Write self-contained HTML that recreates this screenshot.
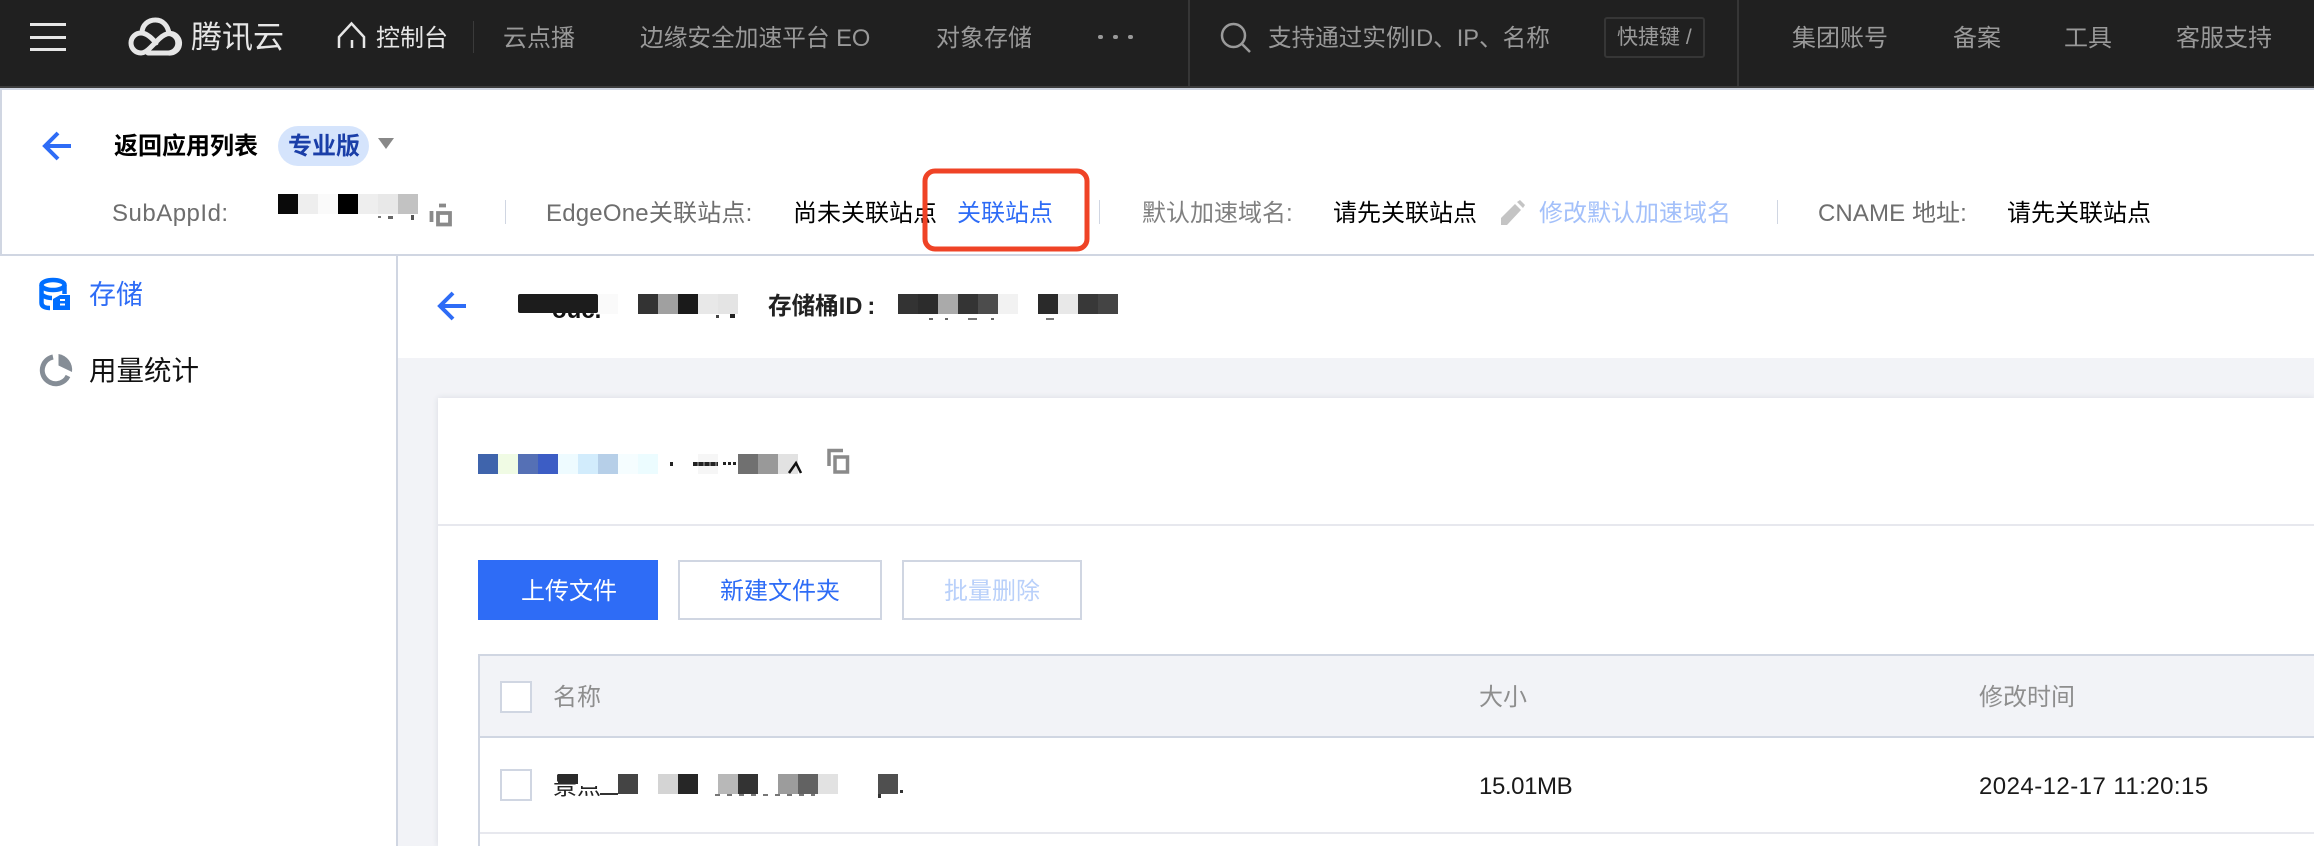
<!DOCTYPE html>
<html lang="zh">
<head>
<meta charset="utf-8">
<title>腾讯云</title>
<style>
html,body{margin:0;padding:0;width:2314px;height:846px;overflow:hidden;background:#fff}
body{position:relative;font-family:"Liberation Sans","Noto Sans CJK SC",sans-serif;font-size:24px}
.a{position:absolute}
.t{position:absolute;white-space:nowrap;line-height:34px;height:34px}
.n{color:#999;top:22px}
.g{color:#6e6e6e;top:197px}
.k{color:#000;top:197px}
.b{background:#d0d6e2}
svg{position:absolute;left:0;top:0;overflow:visible}
</style>
</head>
<body>
<!-- top nav -->
<div class="a" style="left:0;top:0;width:2314px;height:86px;background:#202020"></div>
<div class="a" style="left:0;top:86px;width:2314px;height:2px;background:#3c3c3c"></div>
<div class="a" style="left:0;top:88px;width:2314px;height:2px;background:#d0d6e2"></div>
<div class="a" style="left:30px;top:23px;width:36px;height:3px;background:#e6e6e6"></div>
<div class="a" style="left:30px;top:36px;width:36px;height:3px;background:#e6e6e6"></div>
<div class="a" style="left:30px;top:48px;width:36px;height:3px;background:#e6e6e6"></div>
<div class="t" style="left:191px;top:20px;font-size:31px;color:#e6e6e6;line-height:36px;height:36px">腾讯云</div>
<div class="t" style="left:376px;top:22px;color:#e6e6e6">控制台</div>
<div class="a" style="left:473px;top:21px;width:1px;height:32px;background:#3a3a3a"></div>
<div class="t n" style="left:503px">云点播</div>
<div class="t n" style="left:640px;font-size:23.700px">边缘安全加速平台 EO</div>
<div class="t n" style="left:936px">对象存储</div>
<div class="a" style="left:1098px;top:35px;width:5px;height:4px;background:#999;border-radius:3px"></div>
<div class="a" style="left:1113px;top:35px;width:5px;height:4px;background:#999;border-radius:3px"></div>
<div class="a" style="left:1128px;top:35px;width:5px;height:4px;background:#999;border-radius:3px"></div>
<div class="a" style="left:1188px;top:0;width:2px;height:86px;background:#363636"></div>
<div class="t n" style="left:1268px;font-size:23.6px">支持通过实例ID、IP、名称</div>
<div class="a" style="left:1604px;top:17px;width:97px;height:37px;border:2px solid #363636;border-radius:3px"></div>
<div class="t n" style="left:1617px;top:21px;font-size:21px">快捷键 /</div>
<div class="a" style="left:1737px;top:0;width:2px;height:86px;background:#363636"></div>
<div class="t n" style="left:1792px">集团账号</div>
<div class="t n" style="left:1953px">备案</div>
<div class="t n" style="left:2064px">工具</div>
<div class="t n" style="left:2176px">客服支持</div>

<!-- app header panel -->
<div class="a" style="left:0;top:90px;width:2px;height:166px;background:#d0d6e2"></div>
<div class="a" style="left:0;top:254px;width:2314px;height:2px;background:#d0d6e2"></div>
<div class="t" style="left:114px;top:130px;font-size:24px;font-weight:700;color:#000">返回应用列表</div>
<div class="a" style="left:278px;top:126px;width:91px;height:40px;border-radius:20px;background:#d5e4fc"></div>
<div class="t" style="left:288px;top:130px;font-size:24px;font-weight:700;color:#1a3ea8">专业版</div>
<div class="a" style="left:378px;top:138px;width:0;height:0;border-left:8px solid transparent;border-right:8px solid transparent;border-top:11px solid #888"></div>
<div class="t g" style="left:112px;letter-spacing:.5px">SubAppId:</div>
<div class="a" style="left:278px;top:194px;width:20px;height:20px;background:#0a0a0a"></div>
<div class="a" style="left:298px;top:194px;width:20px;height:20px;background:#eee"></div>
<div class="a" style="left:318px;top:194px;width:20px;height:20px;background:#fafafa"></div>
<div class="a" style="left:338px;top:194px;width:20px;height:20px;background:#000"></div>
<div class="a" style="left:358px;top:194px;width:20px;height:20px;background:#eee"></div>
<div class="a" style="left:378px;top:194px;width:20px;height:20px;background:#e8e8e8"></div>
<div class="a" style="left:398px;top:194px;width:20px;height:20px;background:#c2c2c2"></div>
<div class="a" style="left:378px;top:216px;width:3px;height:2px;background:#777"></div>
<div class="a" style="left:388px;top:216px;width:5px;height:3px;background:#666"></div>
<div class="a" style="left:411px;top:215px;width:3px;height:5px;background:#555"></div>
<div class="a b" style="left:505px;top:200px;width:1px;height:24px"></div>
<div class="t g" style="left:546px;letter-spacing:.2px">EdgeOne关联站点:</div>
<div class="t k" style="left:793px">尚未关联站点</div>
<div class="t" style="left:957px;top:197px;color:#2e6cf6">关联站点</div>
<div class="a b" style="left:1099px;top:200px;width:1px;height:24px"></div>
<div class="t g" style="left:1142px;color:#808080">默认加速域名:</div>
<div class="t k" style="left:1333px">请先关联站点</div>
<div class="t" style="left:1539px;top:197px;color:#a3c0fa">修改默认加速域名</div>
<div class="a b" style="left:1777px;top:200px;width:1px;height:24px"></div>
<div class="t g" style="left:1818px;letter-spacing:.1px">CNAME 地址:</div>
<div class="t k" style="left:2007px">请先关联站点</div>

<!-- sidebar -->
<div class="a b" style="left:396px;top:256px;width:2px;height:590px"></div>
<div class="t" style="left:89px;top:278px;font-size:27px;color:#2e6cf6">存储</div>
<div class="t" style="left:89px;top:354px;font-size:27.500px;color:#111">用量统计</div>

<!-- main -->
<div class="a" style="left:398px;top:358px;width:1916px;height:488px;background:#f2f3f7"></div>
<div class="a" style="left:438px;top:398px;width:1876px;height:448px;background:#fff;box-shadow:0 0 6px rgba(40,50,80,.12)"></div>

<!-- bucket header mosaics -->
<div class="t" style="left:552px;top:298px;font-size:24px;font-weight:700;color:#111;height:26px;line-height:26px;clip-path:inset(15px 0 0 0)">ouc.</div>
<div class="a" style="left:518px;top:294px;width:80px;height:19px;background:#1c1c1c;border-radius:2px"></div>
<div class="a" style="left:598px;top:294px;width:20px;height:20px;background:#fafafa"></div>
<div class="a" style="left:638px;top:294px;width:20px;height:20px;background:#333"></div>
<div class="a" style="left:658px;top:294px;width:20px;height:20px;background:#a0a0a0"></div>
<div class="a" style="left:678px;top:294px;width:20px;height:20px;background:#1a1a1a"></div>
<div class="a" style="left:698px;top:294px;width:20px;height:20px;background:#e8e8e8"></div>
<div class="a" style="left:718px;top:294px;width:20px;height:20px;background:#e4e4e4"></div>
<div class="a" style="left:716px;top:315px;width:3px;height:3px;background:#444"></div>
<div class="a" style="left:730px;top:314px;width:5px;height:4px;background:#222"></div>
<div class="t" style="left:768px;top:290px;font-size:23.600px;font-weight:700;color:#222">存储桶ID<span style="margin-left:5px">:</span></div>
<div class="a" style="left:898px;top:294px;width:20px;height:20px;background:#333"></div>
<div class="a" style="left:918px;top:294px;width:20px;height:20px;background:#2c2c2c"></div>
<div class="a" style="left:938px;top:294px;width:20px;height:20px;background:#aaa"></div>
<div class="a" style="left:958px;top:294px;width:20px;height:20px;background:#343434"></div>
<div class="a" style="left:978px;top:294px;width:20px;height:20px;background:#4c4c4c"></div>
<div class="a" style="left:998px;top:294px;width:20px;height:20px;background:#f2f2f2"></div>
<div class="a" style="left:1038px;top:294px;width:20px;height:20px;background:#2a2a2a"></div>
<div class="a" style="left:1058px;top:294px;width:20px;height:20px;background:#e8e8e8"></div>
<div class="a" style="left:1078px;top:294px;width:20px;height:20px;background:#383838"></div>
<div class="a" style="left:1098px;top:294px;width:20px;height:20px;background:#444"></div>
<div class="a" style="left:929px;top:318px;width:4px;height:2px;background:#666"></div>
<div class="a" style="left:945px;top:318px;width:3px;height:2px;background:#666"></div>
<div class="a" style="left:968px;top:318px;width:9px;height:2px;background:#777"></div>
<div class="a" style="left:991px;top:318px;width:3px;height:2px;background:#666"></div>
<div class="a" style="left:1046px;top:318px;width:8px;height:2px;background:#777"></div>

<!-- card title mosaics -->
<div class="a" style="left:478px;top:454px;width:20px;height:20px;background:#3f64ac"></div>
<div class="a" style="left:498px;top:454px;width:20px;height:20px;background:#f0fbe4"></div>
<div class="a" style="left:518px;top:454px;width:20px;height:20px;background:#5570b5"></div>
<div class="a" style="left:538px;top:454px;width:20px;height:20px;background:#3c5dc5"></div>
<div class="a" style="left:558px;top:454px;width:20px;height:20px;background:#eefbff"></div>
<div class="a" style="left:578px;top:454px;width:20px;height:20px;background:#d2ecfc"></div>
<div class="a" style="left:598px;top:454px;width:20px;height:20px;background:#b6cfe8"></div>
<div class="a" style="left:618px;top:454px;width:20px;height:20px;background:#f5fdff"></div>
<div class="a" style="left:638px;top:454px;width:20px;height:20px;background:#ecfcff"></div>
<div class="a" style="left:670px;top:462px;width:3px;height:4px;background:#222"></div>
<div class="a" style="left:698px;top:454px;width:20px;height:20px;background:#f6f6f6"></div>
<div class="a" style="left:693px;top:462px;width:25px;height:4px;background:repeating-linear-gradient(90deg,#222 0 4px,#666 4px 6px)"></div>
<div class="a" style="left:723px;top:462px;width:15px;height:3px;background:repeating-linear-gradient(90deg,#222 0 3px,#fff 3px 5px)"></div>
<div class="a" style="left:738px;top:454px;width:20px;height:20px;background:#707070"></div>
<div class="a" style="left:758px;top:454px;width:20px;height:20px;background:#999"></div>
<div class="a" style="left:778px;top:454px;width:20px;height:20px;background:#e2e2e2"></div>
<div class="a" style="left:438px;top:524px;width:1876px;height:2px;background:#e7e8ee"></div>

<!-- buttons -->
<div class="a" style="left:478px;top:560px;width:180px;height:60px;background:#2e6cf6"></div>
<div class="t" style="left:521px;top:574.500px;color:#fff">上传文件</div>
<div class="a" style="left:678px;top:560px;width:200px;height:56px;border:2px solid #d0d6e2"></div>
<div class="t" style="left:720px;top:574.500px;color:#2e6cf6">新建文件夹</div>
<div class="a" style="left:902px;top:560px;width:176px;height:56px;border:2px solid #d0d6e2"></div>
<div class="t" style="left:944px;top:574.500px;color:#b9d0fa">批量删除</div>

<!-- table -->
<div class="a" style="left:478px;top:654px;width:1836px;height:2px;background:#d0d6e2"></div>
<div class="a" style="left:480px;top:656px;width:1834px;height:80px;background:#f2f3f7"></div>
<div class="a" style="left:478px;top:736px;width:1836px;height:2px;background:#d0d6e2"></div>
<div class="a" style="left:478px;top:654px;width:2px;height:192px;background:#d0d6e2"></div>
<div class="a" style="left:480px;top:832px;width:1834px;height:2px;background:#e7e8ee"></div>
<div class="a" style="left:500px;top:681px;width:28px;height:28px;border:2px solid #d0d6e2;background:#fff"></div>
<div class="a" style="left:500px;top:769px;width:28px;height:28px;border:2px solid #d0d6e2;background:#fff"></div>
<div class="t" style="left:553px;top:681px;color:#8e8e8e">名称</div>
<div class="t" style="left:1479px;top:681px;color:#8e8e8e">大小</div>
<div class="t" style="left:1979px;top:681px;color:#8e8e8e">修改时间</div>
<div class="t" style="left:553px;top:770px;color:#222">景点</div>
<div class="a" style="left:578px;top:766px;width:40px;height:20px;background:#fff"></div>
<div class="a" style="left:600px;top:793px;width:18px;height:2px;background:#333"></div>
<div class="a" style="left:558px;top:774px;width:20px;height:10px;background:#2a2a2a"></div>
<div class="a" style="left:618px;top:774px;width:20px;height:20px;background:#444"></div>
<div class="a" style="left:658px;top:774px;width:20px;height:20px;background:#d4d4d4"></div>
<div class="a" style="left:678px;top:774px;width:20px;height:20px;background:#262626"></div>
<div class="a" style="left:718px;top:774px;width:20px;height:20px;background:#b8b8b8"></div>
<div class="a" style="left:738px;top:774px;width:20px;height:20px;background:#333"></div>
<div class="a" style="left:778px;top:774px;width:20px;height:20px;background:#9c9c9c"></div>
<div class="a" style="left:798px;top:774px;width:20px;height:20px;background:#626262"></div>
<div class="a" style="left:818px;top:774px;width:20px;height:20px;background:#e2e2e2"></div>
<div class="a" style="left:878px;top:774px;width:20px;height:20px;background:#4f4f4f"></div>
<div class="a" style="left:878px;top:794px;width:3px;height:4px;background:#333"></div>
<div class="a" style="left:900px;top:790px;width:3px;height:3px;background:#333"></div>
<div class="a" style="left:715px;top:794px;width:100px;height:2px;background:repeating-linear-gradient(90deg,#777 0 5px,#fff 5px 12px)"></div>
<div class="t" style="left:1479px;top:770px;color:#1a1a1a;letter-spacing:-.4px">15.01MB</div>
<div class="t" style="left:1979px;top:770px;color:#1a1a1a;letter-spacing:.45px">2024-12-17 11:20:15</div>

<!-- icons -->
<svg width="2314" height="846" viewBox="0 0 2314 846" fill="none">
  <!-- logo -->
  <g stroke="#e6e6e6" stroke-width="5" stroke-linecap="round" stroke-linejoin="round">
    <path d="M148 53H168.500A9.500 9.500 0 0 0 171 33.500C166 33 162 36 159 39L150 48C147 51 144 53 141 53A10 10 0 0 1 141 33C146 33 151 37 156 43"/>
    <path d="M142 33C142 25 148 20 155.500 20C163 20 168 26 169 33.500"/>
    <path d="M169 33.500A9.800 9.800 0 0 1 177.800 43A10 10 0 0 1 168.500 53"/>
  </g>
  <!-- home -->
  <path d="M339 48V37L351.500 23.500L364 37V48M352 40V48" stroke="#e6e6e6" stroke-width="2.500"/>
  <!-- search -->
  <circle cx="1233.500" cy="35.500" r="11.500" stroke="#9a9a9a" stroke-width="2.500"/>
  <path d="M1242 44L1250 52" stroke="#9a9a9a" stroke-width="2.500"/>
  <!-- back arrows -->
  <path d="M71 146H46M58 133L45 146L58 159" stroke="#2e6cf6" stroke-width="4"/>
  <path d="M466 306H441M453 293L440 306L453 319" stroke="#2e6cf6" stroke-width="4"/>
  <!-- copy icons -->
  <path d="M431.500 211V222M439 205.500H446M438 213H450V224.500H438Z" stroke="#8a8a8a" stroke-width="3.800"/>
  <path d="M843 450.500H829V466M835 457H847.500V472H835Z" stroke="#8a8a8a" stroke-width="3.500"/>
  <!-- stray fragment by card title -->
  <path d="M789 473L796 463L801 473" stroke="#111" stroke-width="2.500"/>
  <!-- pencil -->
  <path d="M1501 225V218L1515 204L1521 210L1507 225Z" fill="#c4c4c4"/>
  <path d="M1517 202L1520 200L1525 205L1523 208Z" fill="#c4c4c4"/>
  <!-- red highlight -->
  <rect x="925" y="171" width="162" height="78" rx="10" stroke="#ef4326" stroke-width="5"/>
  <!-- storage icon -->
  <ellipse cx="53" cy="285" rx="11.500" ry="5" stroke="#006eff" stroke-width="4.500"/>
  <path d="M41.500 285V303C41.500 307 46 308 50 308M64.500 285V294M42 295C45 297 49 298 52 298" stroke="#006eff" stroke-width="4.500"/>
  <path d="M53 299L60 295H70V310H53Z" fill="#006eff"/>
  <path d="M60 300H65M60 304.500H65" stroke="#fff" stroke-width="2"/>
  <!-- stats icon -->
  <path d="M53 357A13.500 13.500 0 1 0 68 376" stroke="#858d96" stroke-width="5"/>
  <path d="M58.500 354A16 16 0 0 1 72 372L58.500 365.500Z" fill="#858d96"/>
</svg>
</body>
</html>
